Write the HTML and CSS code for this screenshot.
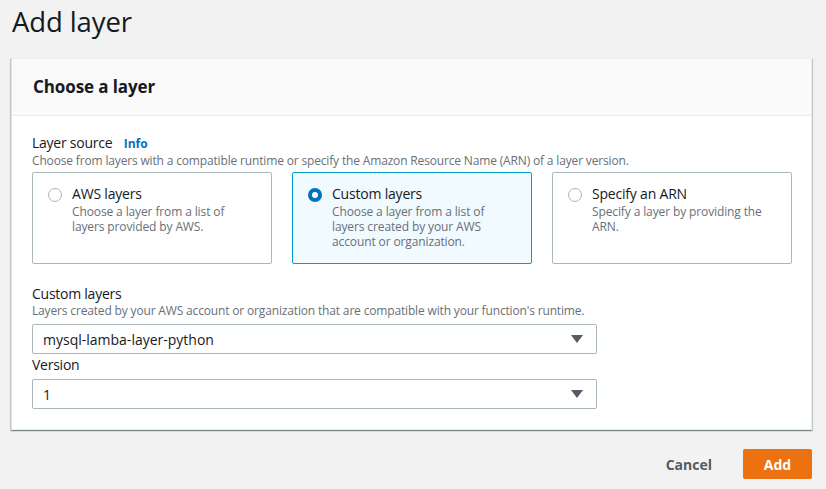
FILE: index.html
```html
<!DOCTYPE html>
<html>
<head>
<meta charset="utf-8">
<link rel="stylesheet" href="styles.css">
</head>
<body>
<div class="page">
  <h1 class="title">Add layer</h1>
  <div class="card">
    <div class="card-header">Choose a layer</div>
    <div class="card-body">
      <div class="field-label">Layer source <span class="info">Info</span></div>
      <div class="field-desc">Choose from layers with a compatible runtime or specify the Amazon Resource Name (ARN) of a layer version.</div>
      <div class="tiles">
        <div class="tile">
          <span class="radio"></span>
          <div class="tile-text">
            <div class="tile-title">AWS layers</div>
            <div class="tile-desc">Choose a layer from a list of layers provided by AWS.</div>
          </div>
        </div>
        <div class="tile tile-selected">
          <span class="radio radio-on"></span>
          <div class="tile-text">
            <div class="tile-title">Custom layers</div>
            <div class="tile-desc">Choose a layer from a list of layers created by your AWS account or organization.</div>
          </div>
        </div>
        <div class="tile">
          <span class="radio"></span>
          <div class="tile-text">
            <div class="tile-title">Specify an ARN</div>
            <div class="tile-desc">Specify a layer by providing the ARN.</div>
          </div>
        </div>
      </div>
      <div class="field-label field-gap">Custom layers</div>
      <div class="field-desc desc-gap">Layers created by your AWS account or organization that are compatible with your function's runtime.</div>
      <div class="select"><span>mysql-lamba-layer-python</span><span class="caret"></span></div>
      <div class="field-label version-label">Version</div>
      <div class="select select-version"><span>1</span><span class="caret"></span></div>
    </div>
  </div>
  <div class="actions">
    <span class="cancel">Cancel</span>
    <span class="add">Add</span>
  </div>
</div>
</body>
</html>
```
FILE: styles.css
```css
* { box-sizing: border-box; }
html, body { margin: 0; padding: 0; }
body {
  background: #f2f2f2;
  font-family: "Open Sans", "Noto Sans", sans-serif;
  color: #16191f;
  width: 826px;
  height: 489px;
  overflow: hidden;
}
.page { padding: 0 14px 0 11px; }
.title {
  margin: 0;
  padding: 3px 0 0 1px;
  font-size: 27.5px;
  font-weight: 400;
  line-height: 38px;
  letter-spacing: -0.1px;
}
.card {
  margin-top: 17px;
  width: 801px;
  background: #fff;
  border: 1px solid #eaeded;
  border-left-color: #e0e0e0;
  box-shadow: 0 1px 1px 0 rgba(0,28,36,0.3), 1px 1px 1px 0 rgba(0,28,36,0.15), -1px 1px 1px 0 rgba(0,28,36,0.15);
}
.card-header {
  background: #fafafa;
  border-bottom: 1px solid #eaeded;
  height: 57px;
  padding: 16px 20px 0 21px;
  font-size: 17px;
  font-weight: 700;
  line-height: 24px;
  letter-spacing: -0.1px;
}
.card-body { padding: 17px 19px 20px 20px; }
.field-label {
  font-size: 14px;
  line-height: 20px;
  color: #16191f;
  letter-spacing: -0.25px;
}
.field-gap { margin-top: 20px; }
.field-desc.desc-gap { margin-bottom: 6px; }
.version-label { margin-top: 1px; }
.info {
  color: #0073bb;
  font-weight: 700;
  font-size: 12px;
  margin-left: 8px;
  letter-spacing: 0;
}
.field-desc {
  font-size: 12px;
  line-height: 14px;
  color: #687078;
  margin-bottom: 4px;
  letter-spacing: -0.16px;
}
.tiles {
  display: flex;
  gap: 20px;
}
.tile {
  flex: none;
  width: 240px;
  height: 92px;
  border: 1px solid #aab7b8;
  border-radius: 2px;
  display: flex;
  padding: 13px 10px 0 15px;
  gap: 10px;
}
.tile-text { max-width: 175px; }
.tile-selected {
  background: #f1faff;
  border-color: #00a1c9;
}
.radio {
  flex: none;
  width: 14px;
  height: 14px;
  margin-top: 2px;
  border: 1px solid #aab7b8;
  border-radius: 50%;
  background: #fff;
}
.radio-on {
  border: 4px solid #0073bb;
  background: #fff;
}
.tile-title {
  font-size: 14px;
  line-height: 16px;
  color: #16191f;
  letter-spacing: -0.2px;
}
.tile-desc {
  margin-top: 2px;
  font-size: 12px;
  line-height: 15px;
  color: #687078;
  letter-spacing: -0.12px;
}
.select {
  width: 565px;
  height: 30px;
  border: 1px solid #aab7b8;
  border-radius: 2px;
  background: #fff;
  display: flex;
  align-items: center;
  justify-content: space-between;
  padding: 0 13px 0 10px;
  font-size: 14px;
  color: #16191f;
}
.select-version { margin-top: 4px; }
.caret {
  width: 0;
  height: 0;
  border-left: 6px solid transparent;
  border-right: 6px solid transparent;
  border-top: 8px solid #545b64;
}
.actions {
  display: flex;
  justify-content: flex-end;
  align-items: center;
  gap: 31px;
  margin-top: 19px;
  width: 801px;
}
.cancel {
  font-size: 14px;
  font-weight: 700;
  color: #545b64;
}
.add {
  background: #ec7211;
  color: #fff;
  font-size: 14px;
  font-weight: 700;
  width: 69px;
  height: 30px;
  border-radius: 2px;
  display: flex;
  align-items: center;
  justify-content: center;
}
```
